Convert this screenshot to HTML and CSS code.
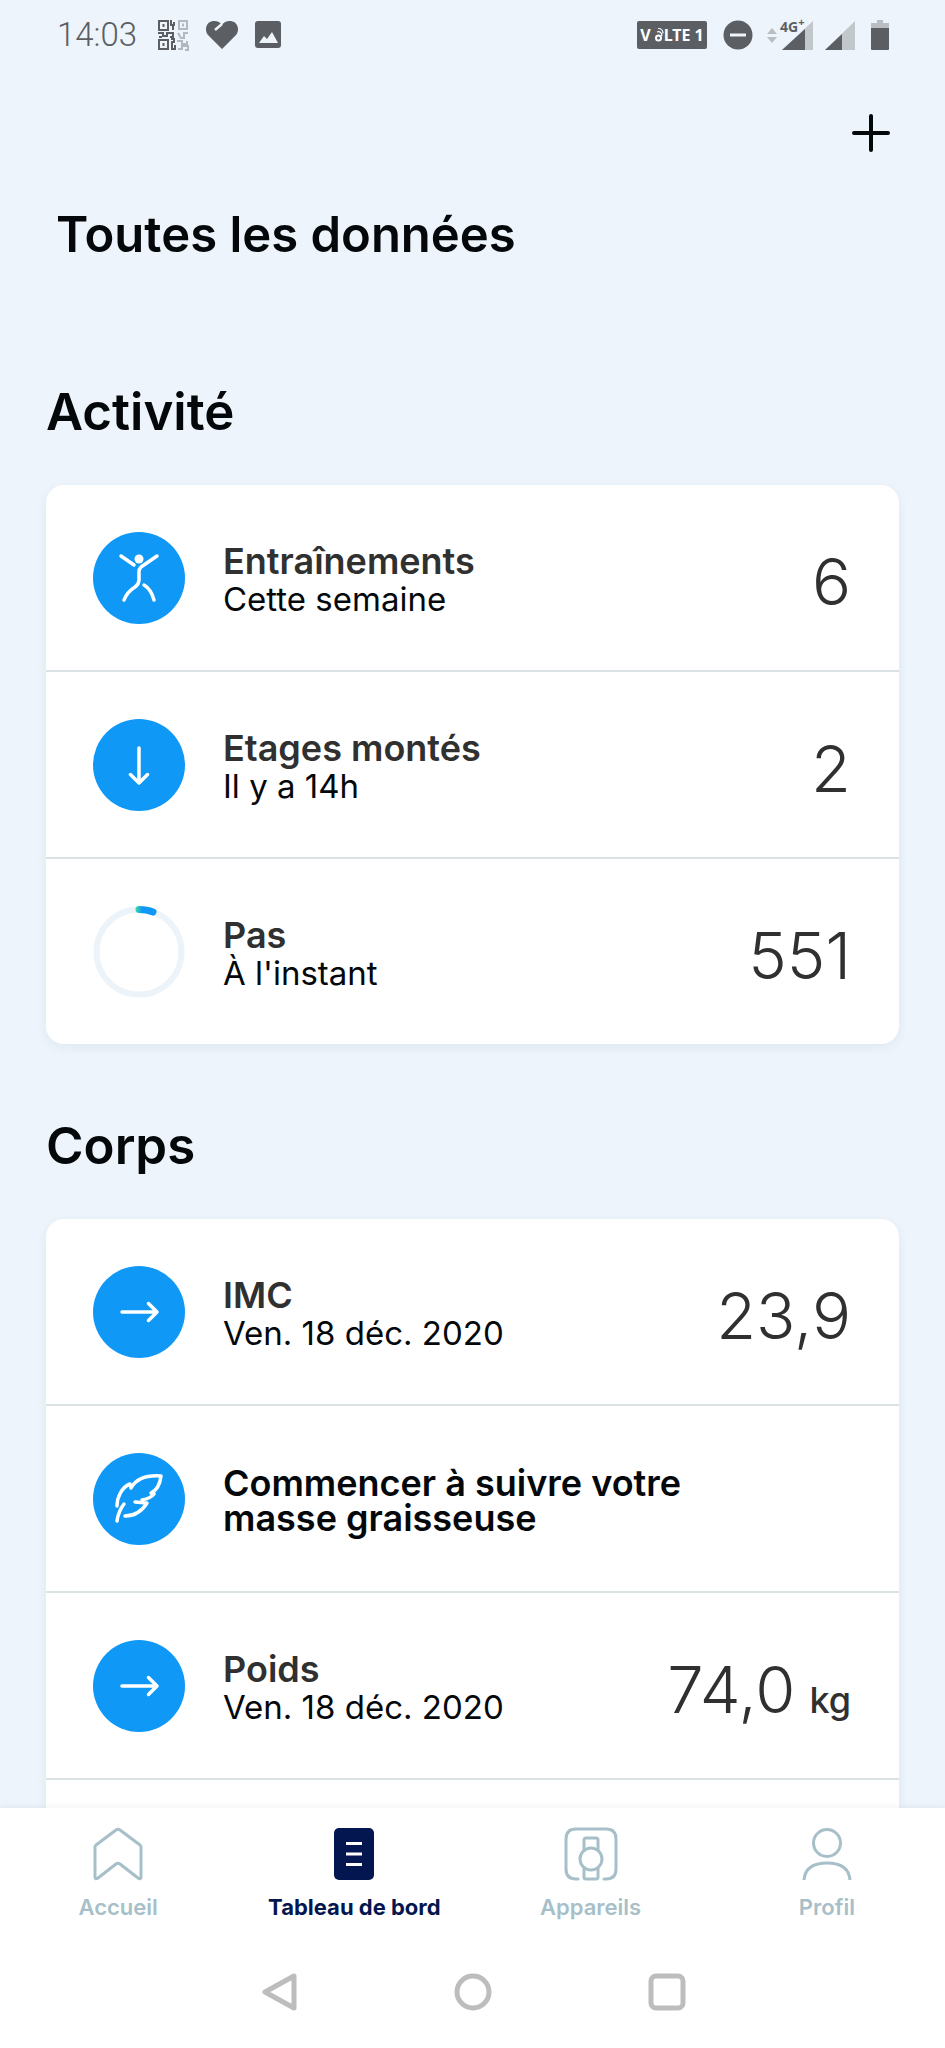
FILE: index.html
```html
<!DOCTYPE html>
<html lang="fr">
<head>
<meta charset="utf-8">
<meta name="viewport" content="width=device-width, initial-scale=1">
<title>Toutes les données</title>
<link rel="stylesheet" href="styles.css">
</head>
<body>
<div class="app">
  <div class="status">
    <div class="status-left">
      <span class="time">14:03</span>
      <svg class="qr" width="32" height="32" viewBox="0 0 32 32" fill="none" stroke="#5b5f63" stroke-width="2">
        <path d="M2 2h9v9H2zM2 21h9v9H2z"/>
        <path d="M5.500 6.500h2M5.500 25.500h2" stroke-width="3"/>
        <path d="M14 1v5h2v5M17 3v4M1 14h5v3h4v-3h6v4h-3M14 20h3v3h-2v7h3M18 26v5M2 18h3"/>
        <g stroke="#b3b9be"><path d="M22 2h8v8h-8zM21 14l3 5h3v-5h4M20 22h5v3h5v-3M21 30h4v-3h6v4h-3"/><path d="M25 6h2" stroke-width="3"/></g>
      </svg>
      <svg width="34" height="32" viewBox="0 0 34 32"><path d="M17 30 3 16C-1 11 1 3 8 2c4-.5 7 1 9 4 2-3 5-4.500 9-4 7 1 9 9 5 14z" fill="#5b5f63"/><path d="m17 5-7 6" stroke="#edf4fb" stroke-width="2.500"/></svg>
      <svg width="26" height="28" viewBox="0 0 26 28"><rect width="26" height="27" rx="3" fill="#5b5f63"/><path d="m4 22 5-7 3 3 5-7 6 11z" fill="#edf4fb"/></svg>
    </div>
    <div class="status-right">
      <span class="volte">V<svg width="9" height="16" viewBox="0 0 9 16" fill="none" stroke="#fff" stroke-width="2"><circle cx="3.500" cy="11" r="2.500"/><path d="M2 5c3-1 5 1 5 4M3 1.500c3 0 5 2 5 5" stroke-width="1.200"/></svg>LTE 1</span>
      <svg width="30" height="30" viewBox="0 0 30 30"><circle cx="15" cy="15" r="14.500" fill="#5b5f63"/><path d="M7 15h16" stroke="#edf4fb" stroke-width="3"/></svg>
      <span class="network">
        <svg width="46" height="34" viewBox="0 0 46 34"><path d="m5 10 5 6H0zM0 19h10l-5 6z" fill="#b9bec3"/><path d="M46 3v29H15z" fill="#c2c7cc"/><path d="M38 11v21H15z" fill="#5b5f63"/></svg>
        <span class="network-label">4G<sup>+</sup></span>
      </span>
      <svg width="30" height="34" viewBox="0 0 30 34"><path d="M30 3v29H0z" fill="#c2c7cc"/><path d="M17 16v16H0z" fill="#5b5f63"/></svg>
      <svg width="18" height="32" viewBox="0 0 18 32"><path d="M6 1h6v3h6v5H0V4h6z" fill="#b9bec3"/><path d="M0 9h18v21q0 1-1 1H1q-1 0-1-1z" fill="#5b5f63"/></svg>
    </div>
  </div>

  <main class="content">
    <div class="toolbar">
      <button class="add" type="button" aria-label="+">
        <svg width="38" height="38" viewBox="0 0 38 38" stroke="#05080b" stroke-width="4" stroke-linecap="round"><path d="M19 2v34M2 19h34"/></svg>
      </button>
    </div>
    <h1 class="page-title">Toutes les données</h1>

    <section class="section">
      <h2 class="section-title">Activité</h2>
      <ul class="card">
        <li class="row">
          <svg class="badge" viewBox="0 0 92 92" fill="none" stroke="#fff" stroke-width="3.500" stroke-linecap="round" stroke-linejoin="round"><circle cx="46" cy="46" r="46" fill="#1098f7" stroke="none"/><circle cx="46" cy="27" r="4.500" fill="#fff" stroke="none"/><path d="m28 24 13 9M64 24 48 35q-2 2-2 5v8q0 4-4 7-8 5-11 13M51 53q7 4 10 15"/></svg>
          <div class="info"><span class="name">Entraînements</span><span class="when">Cette semaine</span></div>
          <span class="value">6</span>
        </li>
        <li class="row">
          <svg class="badge" viewBox="0 0 92 92" fill="none" stroke="#fff" stroke-width="3.500" stroke-linecap="round" stroke-linejoin="round"><circle cx="46" cy="46" r="46" fill="#1098f7" stroke="none"/><path d="M46 29v35M37.500 55.500 46 64l8.500-8.500"/></svg>
          <div class="info"><span class="name">Etages montés</span><span class="when">Il y a 14h</span></div>
          <span class="value">2</span>
        </li>
        <li class="row">
          <svg class="badge" viewBox="0 0 92 92" fill="none"><defs><linearGradient id="steps" gradientUnits="userSpaceOnUse" x1="42" y1="0" x2="49" y2="0"><stop offset="0" stop-color="#42e2a0"/><stop offset="1" stop-color="#1098f7"/></linearGradient></defs><circle cx="46" cy="46" r="42.500" stroke="#ecf3f9" stroke-width="6"/><path d="M46 3.500q8 0 14 2.500" stroke="url(#steps)" stroke-width="7" stroke-linecap="round"/></svg>
          <div class="info"><span class="name">Pas</span><span class="when">À l'instant</span></div>
          <span class="value">551</span>
        </li>
      </ul>
    </section>

    <section class="section">
      <h2 class="section-title">Corps</h2>
      <ul class="card">
        <li class="row">
          <svg class="badge" viewBox="0 0 92 92" fill="none" stroke="#fff" stroke-width="3.500" stroke-linecap="round" stroke-linejoin="round"><circle cx="46" cy="46" r="46" fill="#1098f7" stroke="none"/><path d="M29 46h35M55.500 37.500 64 46l-8.500 8.500"/></svg>
          <div class="info"><span class="name">IMC</span><span class="when">Ven. 18 déc. 2020</span></div>
          <span class="value">23,9</span>
        </li>
        <li class="row">
          <svg class="badge" viewBox="0 0 92 92" fill="none" stroke="#fff" stroke-width="3.500" stroke-linecap="round" stroke-linejoin="round"><circle cx="46" cy="46" r="46" fill="#1098f7" stroke="none"/><path d="M24 53c0-9 5-19 13-22l1 4c5-9 15-13 30-12-1 9-4 14-10 17l3 1c-3 4-7 5-12 6M42 49l12 1c-5 8-12 13-22 13M24 68c1-7 3-12 7-17"/></svg>
          <div class="info"><span class="prompt">Commencer à suivre votre masse graisseuse</span></div>
        </li>
        <li class="row">
          <svg class="badge" viewBox="0 0 92 92" fill="none" stroke="#fff" stroke-width="3.500" stroke-linecap="round" stroke-linejoin="round"><circle cx="46" cy="46" r="46" fill="#1098f7" stroke="none"/><path d="M29 46h35M55.500 37.500 64 46l-8.500 8.500"/></svg>
          <div class="info"><span class="name">Poids</span><span class="when">Ven. 18 déc. 2020</span></div>
          <span class="value">74,0<span class="unit">kg</span></span>
        </li>
        <li class="row"></li>
      </ul>
    </section>
  </main>

  <footer class="footer">
    <nav class="tabs">
      <a class="tab" href="#accueil">
        <svg width="54" height="54" viewBox="0 0 54 54" fill="none" stroke="#a6bfc9" stroke-width="3" stroke-linejoin="round"><path d="M25 3q2-1.500 4 0l20 15q1 1 1 2v30q0 3-3 1L29 37q-2-1.500-4 0L7 51q-3 2-3-1V20q0-1 1-2z"/></svg>
        <span>Accueil</span>
      </a>
      <a class="tab tab-active" href="#tableau" aria-current="page">
        <svg width="54" height="54" viewBox="0 0 54 54"><rect x="7" y="1" width="40" height="52" rx="5" fill="#04164f"/><path d="M19 16.500h16M19 27h16M19 37.500h16" stroke="#fff" stroke-width="3"/></svg>
        <span>Tableau de bord</span>
      </a>
      <a class="tab" href="#appareils">
        <svg width="54" height="54" viewBox="0 0 54 54" fill="none" stroke="#a6bfc9" stroke-width="3" stroke-linecap="round"><path d="M14 52h-2Q2 52 2 42V12Q2 2 12 2h30q10 0 10 10v30q0 10-10 10h-2"/><circle cx="27" cy="32" r="11"/><path d="M20 23V13q0-2 2-2h10q2 0 2 2v10M20 41v9q0 2 2 2h10q2 0 2-2v-9"/></svg>
        <span>Appareils</span>
      </a>
      <a class="tab" href="#profil">
        <svg width="54" height="54" viewBox="0 0 54 54" fill="none" stroke="#a6bfc9" stroke-width="3"><circle cx="27" cy="16" r="13.500"/><path d="M4 53c1-12 9-17 23-17s22 5 23 17"/></svg>
        <span>Profil</span>
      </a>
    </nav>
    <div class="system">
      <svg width="38" height="38" viewBox="0 0 38 38" fill="none" stroke="#bdbdbd" stroke-width="5" stroke-linejoin="round"><path d="M5 19 34 3v32z"/></svg>
      <svg width="38" height="38" viewBox="0 0 38 38" fill="none" stroke="#bdbdbd" stroke-width="5"><circle cx="19" cy="19" r="16"/></svg>
      <svg width="38" height="38" viewBox="0 0 38 38" fill="none" stroke="#bdbdbd" stroke-width="5"><rect x="3" y="3" width="32" height="32" rx="5"/></svg>
    </div>
  </footer>
</div>
</body>
</html>
```
FILE: styles.css
```css
* {
  box-sizing: border-box;
}

body {
  margin: 0;
  background: #edf4fb;
  color: #05080b;
  font-family: Inter, "Noto Sans", sans-serif;
}

svg {
  display: block;
  flex: none;
}

.app {
  display: flex;
  flex-direction: column;
  height: 100vh;
}

/* Status bar */
.status {
  display: flex;
  flex: none;
  justify-content: space-between;
  align-items: center;
  height: 70px;
  padding: 0 56px 0 57px;
  color: #5b5f63;
}

.status-left,
.status-right {
  display: flex;
  align-items: center;
}

.status-left {
  gap: 16px;
}

.status-right {
  gap: 12px;
}

.time {
  margin-right: 4px;
  font: 300 33px/40px Roboto, sans-serif;
}

.volte {
  display: flex;
  align-items: center;
  justify-content: center;
  width: 70px;
  height: 28px;
  margin-right: 4px;
  border-radius: 2px;
  background: #5b5f63;
  color: #fff;
  font: 700 16px/28px "Noto Sans", sans-serif;
}

.network {
  position: relative;
  margin-left: 2px;
}

.network-label {
  position: absolute;
  top: 0;
  left: 13px;
  font: 700 14px/14px "Noto Sans", sans-serif;
}

.network-label sup {
  font-size: 11px;
  line-height: 8px;
}

.status-right svg:last-child {
  margin-left: 4px;
}

/* Content */
.content {
  flex: 1;
  min-height: 0;
  overflow: hidden;
  padding: 39px 46px 0;
}

.toolbar {
  display: flex;
  justify-content: flex-end;
}

.add {
  display: grid;
  place-items: center;
  width: 56px;
  height: 48px;
  padding: 0;
  border: 0;
  background: none;
}

.page-title,
.section-title {
  margin: 0;
  font-weight: 600;
  line-height: 60px;
}

.page-title {
  padding: 48px 10px 45px;
  font-size: 49px;
}

.section {
  padding-top: 72px;
}

.section-title {
  font-size: 51px;
}

.card {
  margin: 43px 0 0;
  padding: 0;
  border-radius: 18px;
  background: #fff;
  box-shadow: 0 3px 12px rgba(40, 60, 70, 0.06);
  list-style: none;
}

.row {
  display: flex;
  align-items: center;
  gap: 38px;
  min-height: 185px;
  padding: 0 48px 0 47px;
}

.row + .row {
  min-height: 187px;
  border-top: 2px solid #dbe2e4;
}

.badge {
  width: 92px;
  height: 92px;
}

.info {
  display: flex;
  flex: 1;
  flex-direction: column;
  padding-top: 4px;
  line-height: 38px;
}

.name {
  color: #303030;
  font-weight: 600;
  font-size: 36px;
}

.when {
  font-size: 33px;
}

.prompt {
  max-width: 520px;
  font-weight: 600;
  font-size: 36px;
  line-height: 35px;
}

.value {
  padding-top: 8px;
  color: #303030;
  font-weight: 350;
  font-size: 65px;
  line-height: 80px;
}

.unit {
  margin-left: 14px;
  font-weight: 500;
  font-size: 36px;
  line-height: 36px;
}

/* Bottom bars */
.footer {
  z-index: 1;
  flex: none;
  background: #fff;
  box-shadow: 0 -2px 5px rgba(40, 60, 70, 0.05);
}

.tabs {
  display: grid;
  grid-template-columns: repeat(4, 1fr);
  padding: 19px 0 20px;
}

.tab {
  display: flex;
  flex-direction: column;
  align-items: center;
  gap: 12px;
  color: #a6bfc9;
  font-weight: 600;
  font-size: 22px;
  line-height: 28px;
  text-decoration: none;
}

.tab-active {
  color: #04164f;
  font-weight: 700;
}

.system {
  display: flex;
  justify-content: center;
  gap: 156px;
  padding: 32px 0 37px;
}
```
